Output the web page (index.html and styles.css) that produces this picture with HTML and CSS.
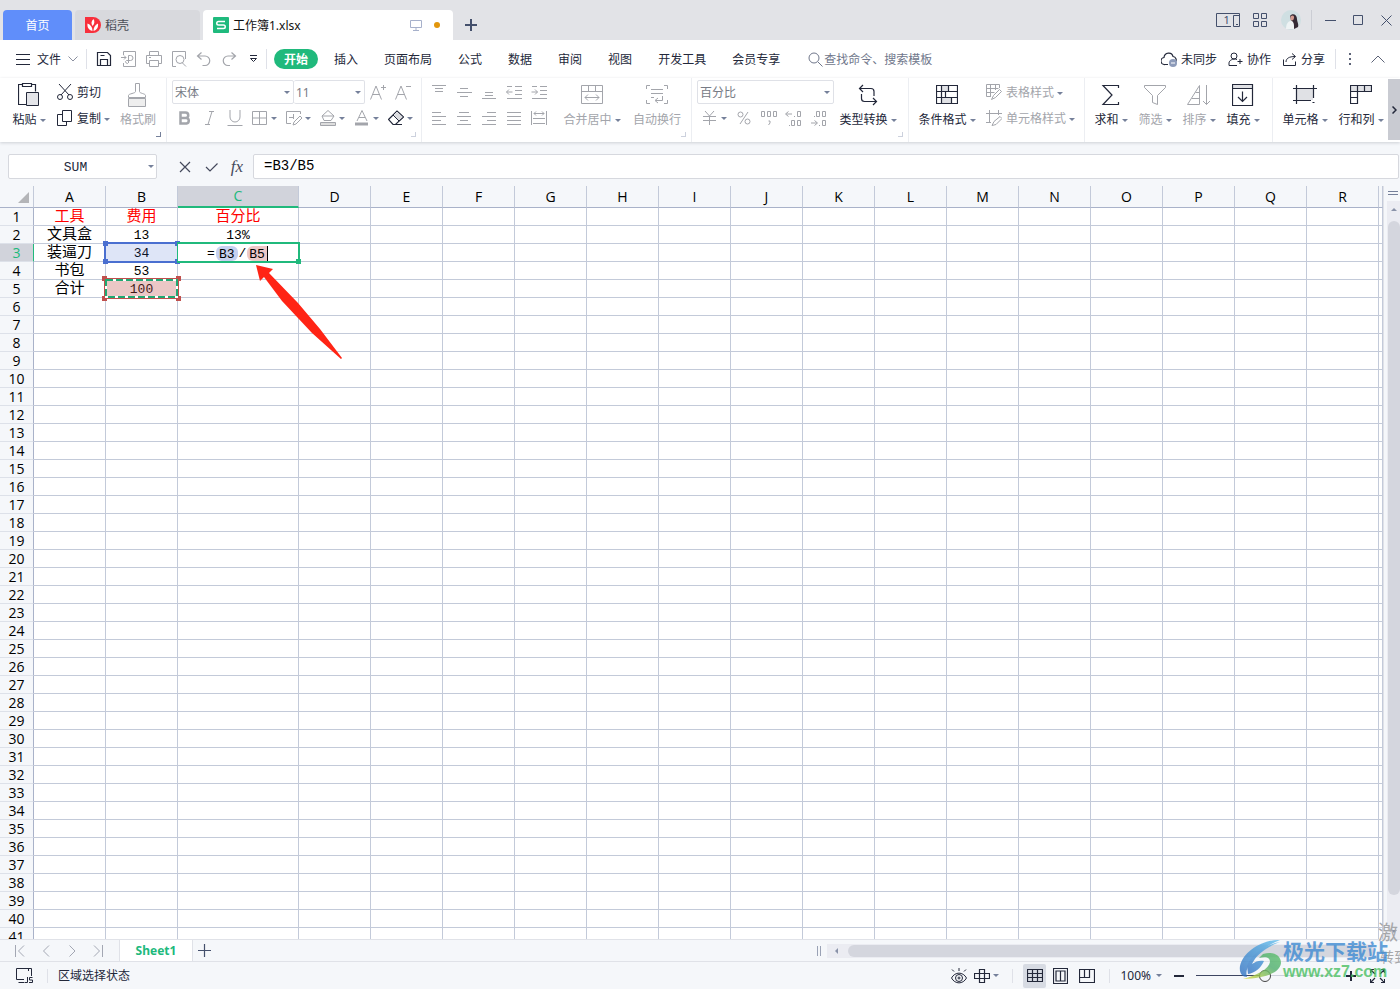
FILE: index.html
```html
<!DOCTYPE html>
<html lang="zh-CN">
<head>
<meta charset="utf-8">
<title>工作簿1.xlsx</title>
<link rel="stylesheet" href="styles.css">
</head>
<body>
<div class="app">
  <header class="titlebar">
    <button class="tab tab-home"><span>首页</span></button>
    <button class="tab tab-docer">
      <svg class="fillico" width="16" height="16" viewBox="0 0 16 16"><path d="M0 0H8a8 8 0 0 1 0 16H0z" fill="#f8303c"/><path d="M7.500 14C3.500 13 2 10 2.500 6.500 5.500 7.500 7.500 10 7.500 14zM7.500 9C6 7 6 4 8.500 2 10 4.500 9.500 7 7.500 9zM8.500 14C8.500 10.500 10 8 13 6.500 13.500 10 12 13 8.500 14z" fill="#fff"/></svg>
      <span>稻壳</span>
    </button>
    <div class="tab tab-file">
      <svg class="fillico" width="16" height="16" viewBox="0 0 16 16"><rect width="16" height="16" rx="1" fill="#1fba7d"/><path d="M12 4.500H5.500a1.500 1.500 0 0 0 0 3.500h5a1.500 1.500 0 0 1 0 3.500H4" fill="none" stroke="#fff" stroke-width="1.500"/></svg>
      <span class="grow">工作簿1.xlsx</span>
      <svg class="ico screen" width="12" height="12" viewBox="0 0 12 12"><path d="M.5 1.500h11v7H.5zM6 8.500v3M3 11.500h6"/></svg>
      <i class="dot"></i>
    </div>
    <button class="tab-add" aria-label="新建"><svg class="ico" width="12" height="12" viewBox="0 0 12 12"><path d="M6 0v12M0 6h12" stroke-width="2"/></svg></button>
    <div class="window-tools">
      <svg class="ico" width="24" height="14" viewBox="0 0 24 14"><path d="M15 13.500H.5V.5h23v13h-6V2.500h6M20 11.500h2"/><text x="7.500" y="11" class="tiny">1</text></svg>
      <svg class="ico" width="15" height="15" viewBox="0 0 15 15"><path d="M.5.5h5v5h-5zM8.500.5h5v5h-5zM.5 8.500h5v5h-5zM8.500 8.500h5v5h-5z"/></svg>
      <svg class="fillico" width="20" height="20" viewBox="0 0 20 20"><circle cx="10" cy="10" r="10" fill="#cfdfe2"/><path d="M9 6c2-3 7-2 7 3 0 3 2 5 1 8l-4 2c0-4-1-7-3-9z" fill="#342b35"/><path d="M9.500 6.500c2-2 4-1 3.500 1.500s-2 3-3.500 2z" fill="#d49c90"/><path d="M5 19c0-5 2-8 5-8s3 4 3 8z" fill="#eef3f4"/></svg>
    </div>
    <div class="window-buttons">
      <button aria-label="最小化"><svg class="ico" width="11" height="11" viewBox="0 0 11 11"><path d="M0 5.500h11"/></svg></button>
      <button aria-label="最大化"><svg class="ico" width="11" height="11" viewBox="0 0 11 11"><path d="M.5.5h9v9h-9z"/></svg></button>
      <button aria-label="关闭"><svg class="ico" width="11" height="11" viewBox="0 0 11 11"><path d="M.5.500l10 10M10.500.500l-10 10"/></svg></button>
    </div>
  </header>

  <nav class="menubar">
    <button class="file-menu">
      <svg class="ico" width="14" height="11" viewBox="0 0 14 11"><path d="M0 .5h14M0 5.500h14M0 10.500h14"/></svg>
      <span>文件</span>
      <svg class="ico pale" width="10" height="6" viewBox="0 0 10 6"><path d="M.5.5 5 5l4.500-4.500"/></svg>
    </button>
    <i class="vline"></i>
    <div class="quick">
      <button aria-label="保存"><svg class="ico" width="16" height="16" viewBox="0 0 16 16"><path d="M1.500 1.500h10l3 3v10h-13zM4.500 14.500v-6h7v6M4.500 4.500h4" stroke-width="1.200"/></svg></button>
      <button class="off" aria-label="输出为PDF"><svg class="ico" width="16" height="16" viewBox="0 0 16 16"><path d="M2.500 4V.5h12v15h-12V12M0 6.500h5M3 4.500l2 2-2 2M7.500 12V4.500h2a2.500 2.500 0 0 1 0 5H5.500a1.500 1.500 0 1 0 2 2"/></svg></button>
      <button class="off" aria-label="打印"><svg class="ico" width="16" height="16" viewBox="0 0 16 16"><path d="M3.500 4.500v-4h9v4M3.500 12.500h-3v-8h15v8h-3M3.500 9.500h9v6h-9zM3 6.500h2"/></svg></button>
      <button class="off" aria-label="打印预览"><svg class="ico" width="16" height="16" viewBox="0 0 16 16"><path d="M5 15.500H1.500V.5h13V8M11 11.500l4 4"/><circle cx="9" cy="8.500" r="4"/></svg></button>
      <button class="off" aria-label="撤销"><svg class="ico" width="16" height="16" viewBox="0 0 16 16"><path d="M5.500 1.500l-4 3.500 4 3.500M1.500 5H9a4.500 4.500 0 0 1 0 9.500H6.500" stroke-width="1.200"/></svg></button>
      <button class="off" aria-label="恢复"><svg class="ico" width="16" height="16" viewBox="0 0 16 16"><path d="M10.500 1.500l4 3.500-4 3.500M14.500 5H7a4.500 4.500 0 0 0 0 9.500h2" stroke-width="1.200"/></svg></button>
      <button aria-label="自定义快速访问工具栏"><svg class="ico" width="9" height="8" viewBox="0 0 9 8"><path d="M1 .5h7M1.500 3.500l3 3 3-3z"/></svg></button>
    </div>
    <i class="vline"></i>
    <button class="pill"><span>开始</span></button>
    <div class="menus">
      <button><span>插入</span></button><button><span>页面布局</span></button><button><span>公式</span></button><button><span>数据</span></button><button><span>审阅</span></button><button><span>视图</span></button><button><span>开发工具</span></button><button><span>会员专享</span></button>
    </div>
    <button class="search">
      <svg class="ico" width="15" height="15" viewBox="0 0 15 15"><circle cx="6" cy="6" r="5"/><path d="M10 10l4.500 4.500"/></svg>
      <span>查找命令、搜索模板</span>
    </button>
    <div class="share">
      <button><svg class="ico" width="16" height="16" viewBox="0 0 16 16"><path d="M7 13.500H4A3.500 3.500 0 0 1 3 6.500C3.500 1 11 .5 12 5.500c3 .5 4 3.500 2.500 5.500" stroke-width="1.200"/><circle cx="12" cy="12" r="4" fill="#8d9bb9" stroke="none"/><path d="M10 12h4" stroke="#fff"/></svg><span>未同步</span></button>
      <button><svg class="ico" width="15" height="15" viewBox="0 0 15 15"><circle cx="6" cy="4" r="3"/><path d="M9 7.500c-4-1.500-8 1-8 3.500v2.500h8M9.500 9.500h5M12 7v5"/></svg><span>协作</span></button>
      <button><svg class="ico" width="15" height="15" viewBox="0 0 15 15"><path d="M1.500 7.500v6h12v-4M4 10c0-3.500 3-5.500 9-5.500M10 1.500l3.500 3-3.500 3"/></svg><span>分享</span></button>
    </div>
    <i class="vline"></i>
    <div class="more">
      <button aria-label="更多"><svg class="ico" width="2" height="12" viewBox="0 0 2 12"><path d="M1 0v2M1 5v2M1 10v2" stroke-width="2"/></svg></button>
      <button aria-label="收起功能区"><svg class="ico" width="14" height="8" viewBox="0 0 14 8"><path d="M.5 7.500 7 1l6.500 6.500"/></svg></button>
    </div>
  </nav>

  <section class="ribbon">
    <div class="group g-clip">
      <button class="big w46"><svg class="ico" width="22" height="24" viewBox="0 0 22 24"><path d="M8 21.500H.5v-20h4M14 1.500h3.500v7M4.500.5h9v3h-9z" stroke-width="1.200"/><path d="M8.500 9.500h12v13h-12z" fill="#e4e5e9"/></svg><span class="lab dd">粘贴</span></button>
      <div class="stack">
        <button class="line"><svg class="ico" width="16" height="16" viewBox="0 0 16 16"><path d="M2 0l10 11M14 0L4 11"/><circle cx="3" cy="13" r="2.500"/><circle cx="13" cy="13" r="2.500"/></svg><span>剪切</span></button>
        <button class="line"><svg class="ico" width="16" height="16" viewBox="0 0 16 16"><path d="M5.500.5h9v11h-9zM5.500 4.500h-5v11h9v-4"/></svg><span class="dd">复制</span></button>
      </div>
      <button class="big w46 off"><svg class="ico" width="20" height="24" viewBox="0 0 20 24"><path d="M7.500.5h4v8c0 2 6 2 6 4v2h-17v-2c0-2 7-2 7-4z"/><path d="M.5 15.500h17v8H.5z" fill="#eee"/></svg><span class="lab">格式刷</span></button>
      <i class="launch dark"></i>
    </div>

    <div class="group g-font">
      <div class="stack">
        <div class="row">
          <label class="combo c-font"><select aria-label="字体"><option>宋体</option></select></label><label class="combo c-size"><select aria-label="字号"><option>11</option></select></label>
          <button class="sq off" aria-label="增大字号"><svg class="ico" width="16" height="16" viewBox="0 0 16 16"><path d="M.5 15.500 6 2l5.500 13.500M2.500 10.500h7M11 3.500h5M13.500 1v5"/></svg></button>
          <button class="sq off" aria-label="减小字号"><svg class="ico" width="16" height="16" viewBox="0 0 16 16"><path d="M.5 15.500 6 2l5.500 13.500M2.500 10.500h7M11 2.500h5"/></svg></button>
        </div>
        <div class="row off">
          <button class="sq" aria-label="加粗"><svg class="ico" width="14" height="16" viewBox="0 0 14 16"><path d="M2.500 2.500h5a2.700 2.700 0 0 1 0 5.500h-5zM2.500 8h6a2.800 2.800 0 0 1 0 5.500h-6z" stroke-width="2.500"/></svg></button>
          <button class="sq" aria-label="倾斜"><svg class="ico" width="14" height="16" viewBox="0 0 14 16"><path d="M6 1.500h5M2 14.500h5M9 1.500l-4 13"/></svg></button>
          <button class="sq" aria-label="下划线"><svg class="ico" width="16" height="16" viewBox="0 0 16 16"><path d="M3 0v7a5 5 0 0 0 10 0V0M.5 15.500h15"/></svg></button>
          <button class="sqd dd" aria-label="边框"><svg class="ico" width="16" height="16" viewBox="0 0 16 16"><path d="M.5 1.500h14v13H.5zM7.500 1.500v13M.5 8h14"/></svg></button>
          <button class="sqd dd" aria-label="绘图边框"><svg class="ico" width="16" height="16" viewBox="0 0 16 16"><path d="M5 13.500H.5v-12h14V4M3 7.500h5M7.500 4v5"/><path d="M7 15l1-3 6-6 2 2-6 6z" fill="#fff"/></svg></button>
          <button class="sqd dd" aria-label="填充颜色"><svg class="ico" width="16" height="16" viewBox="0 0 16 16"><path d="M2 6l6-5.500L14 6l-3 4.500H4zM2 6h12"/><path d="M.5 12.500h15v3H.5z" fill="#ddd"/></svg></button>
          <button class="sqd dd" aria-label="字体颜色"><svg class="ico" width="16" height="16" viewBox="0 0 16 16"><path d="M3 11 8 .5 13 11M5 7.500h6"/><path d="M1 14h13" stroke-width="3"/></svg></button>
          <button class="sqd dd on" aria-label="清除"><svg class="ico" width="16" height="16" viewBox="0 0 16 16"><path d="M.5 9.500 9 1l6.500 6-8 7.500H5z" stroke-width="1.200"/><path d="M5 5l6 6 4.500-4L9 1z" fill="#dcdde1"/><path d="M5 14.500h9"/></svg></button>
        </div>
      </div>
      <i class="launch"></i>
    </div>

    <div class="group g-align off">
      <div class="stack">
        <div class="row">
          <button class="sq" aria-label="顶端对齐"><svg class="ico" width="16" height="16" viewBox="0 0 16 16"><path d="M1 1.500h14M4 4.500h8M4 7.500h8"/></svg></button>
          <button class="sq" aria-label="垂直居中"><svg class="ico" width="16" height="16" viewBox="0 0 16 16"><path d="M4 4.500h8M1 8.500h15M4 12.500h8"/></svg></button>
          <button class="sq" aria-label="底端对齐"><svg class="ico" width="16" height="16" viewBox="0 0 16 16"><path d="M4 8.500h8M4 11.500h8M1 14.500h14"/></svg></button>
          <button class="sq" aria-label="减少缩进"><svg class="ico" width="16" height="16" viewBox="0 0 16 16"><path d="M9 2.500h7M9 6.500h7M9 10.500h7M1 14.500h15M.5 8h6M3 5.500.500 8 3 10.500M1 2.500h5"/></svg></button>
          <button class="sq" aria-label="增加缩进"><svg class="ico" width="16" height="16" viewBox="0 0 16 16"><path d="M9 2.500h7M9 6.500h7M9 10.500h7M1 14.500h15M.5 8h6M4 5.500 6.500 8 4 10.500M1 2.500h5"/></svg></button>
        </div>
        <div class="row">
          <button class="sq" aria-label="左对齐"><svg class="ico" width="16" height="16" viewBox="0 0 16 16"><path d="M1 2.500h9M1 6.500h14M1 10.500h9M1 14.500h14"/></svg></button>
          <button class="sq" aria-label="水平居中"><svg class="ico" width="16" height="16" viewBox="0 0 16 16"><path d="M3 2.500h10M1 6.500h14M4 10.500h8M1 14.500h14"/></svg></button>
          <button class="sq" aria-label="右对齐"><svg class="ico" width="16" height="16" viewBox="0 0 16 16"><path d="M6 2.500h9M1 6.500h14M6 10.500h9M1 14.500h14"/></svg></button>
          <button class="sq" aria-label="两端对齐"><svg class="ico" width="16" height="16" viewBox="0 0 16 16"><path d="M1 2.500h14M1 6.500h14M1 10.500h14M1 14.500h14"/></svg></button>
          <button class="sq" aria-label="分散对齐"><svg class="ico" width="16" height="16" viewBox="0 0 16 16"><path d="M.5 1v14M15.500 1v14M3 3.500h10M5 1.500l-2 2 2 2M11 1.500l2 2-2 2M2 8.500h12M2 13.500h12"/></svg></button>
        </div>
      </div>
      <button class="big w68"><svg class="ico" width="22" height="20" viewBox="0 0 22 20"><path d="M.5.5h21v18H.5zM.5 6.500h21M7.500.5v6M14.500.5v6M4 12.500h14M7 9.500l-3 3 3 3M15 9.500l3 3-3 3"/></svg><span class="lab dd">合并居中</span></button>
      <button class="big w58"><svg class="ico" width="22" height="20" viewBox="0 0 22 20"><path d="M4 .5H.5V4M18 .5h3.500V4M.5 15v3.500H4M21.500 15v3.500H18M5 4.500h12M5 8.500h12M5 12.500h3M16.500 11v4.500h-7M12 13l-3 2.500 3 2.500"/></svg><span class="lab">自动换行</span></button>
      <i class="launch"></i>
    </div>

    <div class="group g-num">
      <div class="stack">
        <div class="row"><label class="combo c-num"><select aria-label="数字格式"><option>百分比</option></select></label></div>
        <div class="row off">
          <button class="sqd dd" aria-label="货币格式"><svg class="ico" width="16" height="16" viewBox="0 0 16 16"><path d="M3 1l4.500 5L12 1M1 6.500h13M1 10.500h13M7.500 6.500V15"/></svg></button>
          <button class="sq" aria-label="百分比样式"><svg class="ico" width="14" height="16" viewBox="0 0 14 16"><circle cx="3.500" cy="4.500" r="2.500"/><circle cx="10.500" cy="11.500" r="2.500"/><path d="M11 2 3 14"/></svg></button>
          <button class="sq" aria-label="千位分隔样式"><svg class="ico" width="18" height="16" viewBox="0 0 18 16"><path d="M1.500 1.500h3v5h-3zM7.500 1.500h3v5h-3zM13.500 1.500h3v5h-3zM8.500 11h1.500v2l-1.500 2"/></svg></button>
          <button class="sq" aria-label="增加小数位数"><svg class="ico" width="18" height="16" viewBox="0 0 18 16"><path d="M1 4h6M3.500 1.500.500 4l3 2.500M9 6.500h1M12.500 1.500h3v5h-3zM4 15.500h1M6.500 10.500h3v5h-3zM12.500 10.500h3v5h-3z"/></svg></button>
          <button class="sq" aria-label="减少小数位数"><svg class="ico" width="18" height="16" viewBox="0 0 18 16"><path d="M1 13h6M4.500 10.500l3 2.500-3 2.500M9 15.500h1M12.500 10.500h3v5h-3zM4 6.500h1M6.500 1.500h3v5h-3zM12.500 1.500h3v5h-3z"/></svg></button>
        </div>
      </div>
      <button class="big w68"><svg class="ico" width="20" height="22" viewBox="0 0 20 22"><path d="M5 1 1.500 4.500 5 8M1.500 4.500H13a3 3 0 0 1 3 3V12M15 14l3.500 3.500L15 21M18.500 17.500H6.500a3 3 0 0 1-3-3V10" stroke-width="1.200"/></svg><span class="lab dd">类型转换</span></button>
      <i class="launch"></i>
    </div>

    <div class="group g-style">
      <button class="big w68"><svg class="ico" width="22" height="20" viewBox="0 0 22 20"><path d="M5 .500h7v6H5zM5 13h11v6H5z" fill="#e0e1e5" stroke="none"/><path d="M.5.5h21v18H.5zM.5 6.500h21M.5 12.500h21M5.500.5v18M12.500.5v6M9.500 6.500v6M15.500 12.500v6" stroke-width="1.200"/></svg><span class="lab dd">条件格式</span></button>
      <div class="stack off">
        <button class="line"><svg class="ico" width="16" height="16" viewBox="0 0 16 16"><path d="M5 12.500H.5V.5h13V4M.5 4.500h12M.5 8.500h8M4.500.5v12M9.500.5V6"/><path d="M5.500 15.500l2-4 6-6 2 2-6 6z" fill="#fff"/></svg><span class="dd">表格样式</span></button>
        <button class="line"><svg class="ico" width="16" height="16" viewBox="0 0 16 16"><path d="M0 3.500h16M3.500 0v13M12.500 0v5M0 12.500h5"/><path d="M6 15.500l2-4 6-5 2 2-6 6z" fill="#fff"/></svg><span class="dd">单元格样式</span></button>
      </div>
    </div>

    <div class="group g-edit">
      <button class="big w44"><svg class="ico" width="20" height="22" viewBox="0 0 20 22"><path d="M17.500 4V1.500H2L11 11 2 20.500h15.500V18" stroke-width="1.200"/></svg><span class="lab dd">求和</span></button>
      <button class="big w44 off"><svg class="ico" width="22" height="22" viewBox="0 0 22 22"><path d="M.5 1.500h21v2l-8 8v9l-5-2v-7l-8-8z"/></svg><span class="lab dd">筛选</span></button>
      <button class="big w44 off"><svg class="ico" width="24" height="22" viewBox="0 0 24 22"><path d="M12.500 1.500v19H.500zM8.500 8.500h4M5 14.500h7.500M19.500 1v19.500M16 17l3.500 3.500L23 17"/></svg><span class="lab dd">排序</span></button>
      <button class="big w44"><svg class="ico" width="22" height="22" viewBox="0 0 22 22"><path d="M.5.5h20v4H.5z" fill="#e0e1e5"/><path d="M.5.5h20v21H.5zM10.500 7.500v10M6 13l4.500 4.500L15 13" stroke-width="1.200"/></svg><span class="lab dd">填充</span></button>
    </div>

    <div class="group g-cells">
      <button class="big w56"><svg class="ico" width="24" height="20" viewBox="0 0 24 20"><path d="M3 3h17v12H3z" fill="#e0e1e5" stroke="none"/><path d="M0 3.500h24M0 15.500h18M3.500 0v19M20.500 0v13M19.500 17.500h2" stroke-width="1.200"/></svg><span class="lab dd">单元格</span></button>
      <button class="big w56"><svg class="ico" width="22" height="20" viewBox="0 0 22 20"><path d="M.5.5h21v6H.5z" fill="#e0e1e5"/><path d="M.5.5h21v6H7.500v12h-7zM7.500.5v6M14.500.5v6M.5 6.500h7M.5 12.500h7" stroke-width="1.200"/></svg><span class="lab dd">行和列</span></button>
    </div>
    <button class="ribbon-next" aria-label="更多功能"><svg class="ico" width="5" height="8" viewBox="0 0 5 8"><path d="M.5.5 4 4 .5 7.500" stroke-width="1.500"/></svg></button>
  </section>

  <section class="formulabar">
    <label class="namebox"><input value="SUM" aria-label="名称框"></label>
    <div class="fx">
      <button aria-label="取消"><svg class="ico" width="12" height="12" viewBox="0 0 12 12"><path d="M1 1l10 10M11 1 1 11" stroke-width="1.200"/></svg></button>
      <button aria-label="输入"><svg class="ico" width="13" height="10" viewBox="0 0 13 10"><path d="M1 5l4 4 7.500-7.500" stroke-width="1.200"/></svg></button>
      <button class="fxname" aria-label="插入函数">fx</button>
    </div>
    <input class="formula" value="=B3/B5" aria-label="编辑栏">
  </section>

  <main class="sheet">
    <div class="grid-wrap">
      <table class="grid" id="grid"></table>
      <svg class="pointer" width="88" height="96" viewBox="0 0 88 96"><path d="M1 1 18 5 14 9 43 39 65 65 87 94 86 95 57 69 27 37 9 13 5 17z" fill="#ff2415"/></svg>
    </div>
    <div class="vscroll">
      <svg class="ico split" width="10" height="4" viewBox="0 0 10 4"><path d="M0 .5h10M0 3.500h10"/></svg>
      <div class="vtrack"><i class="tri up"></i><i class="vthumb"></i><i class="tri down"></i></div>
    </div>
  </main>

  <footer class="sheetbar">
    <div class="nav">
      <button aria-label="第一个"><svg class="ico" width="10" height="12" viewBox="0 0 10 12"><path d="M.5 0v12M9 .5 3.500 6 9 11.500"/></svg></button>
      <button aria-label="上一个"><svg class="ico" width="10" height="12" viewBox="0 0 10 12"><path d="M8 .5 2.500 6 8 11.500"/></svg></button>
      <button aria-label="下一个"><svg class="ico" width="10" height="12" viewBox="0 0 10 12"><path d="M2.500.5 8 6l-5.500 5.500"/></svg></button>
      <button aria-label="最后一个"><svg class="ico" width="10" height="12" viewBox="0 0 10 12"><path d="M9.500 0v12M1 .5 6.500 6 1 11.500"/></svg></button>
    </div>
    <button class="sheet-tab">Sheet1</button>
    <button class="sheet-add" aria-label="新建工作表"><svg class="ico" width="13" height="13" viewBox="0 0 13 13"><path d="M6.500 0v13M0 6.500h13" stroke-width="1.200"/></svg></button>
    <div class="hscroll"><i class="grip"></i><div class="htrack"><i class="tri left"></i><i class="hthumb"></i></div></div>
  </footer>

  <footer class="status">
    <svg class="ico" width="18" height="16" viewBox="0 0 18 16"><path d="M8 11.500H.5V.5h15V8M2.500 14.500h6M12.500 3V.5M11.500 9v5.500H9M16.500 9.500h-3v2.500h3v2.500H13"/></svg>
    <i class="vline"></i>
    <span class="mode">区域选择状态</span>
    <div class="views">
      <svg class="ico" width="16" height="16" viewBox="0 0 16 16"><path d="M.5 10C4 3.500 12 3.500 15.500 10 12 16.500 4 16.500.5 10zM8 0v3M1 1.500l2 2M15 1.500l-2 2"/><circle cx="8" cy="10" r="3.500"/><circle cx="8" cy="10" r="1"/></svg>
      <button class="dd" aria-label="阅读模式"><svg class="ico" width="16" height="14" viewBox="0 0 16 14"><path d="M5.500.5h5v13h-5zM.5 4.500h15v5H.5z" stroke-width="1.200"/></svg></button>
      <i class="vline"></i>
      <button class="vbtn active" aria-label="普通视图"><svg class="ico" width="16" height="14" viewBox="0 0 16 14"><path d="M.5.5h15v12H.5zM.5 4.500h15M.5 8.500h15M5.500.5v12M10.500.5v12" stroke-width="1.200"/></svg></button>
      <button class="vbtn" aria-label="页面布局"><svg class="ico" width="15" height="16" viewBox="0 0 15 16"><path d="M.5.5h14v15H.5zM3 3h9v10H3zM7.500 3v10" stroke-width="1.200"/></svg></button>
      <button class="vbtn" aria-label="分页预览"><svg class="ico" width="16" height="14" viewBox="0 0 16 14"><path d="M.5.5h15v13H.5zM.5 8.500h10v-8M5.500.5v8" stroke-width="1.200"/></svg></button>
      <i class="vline near"></i>
      <button class="zoomval dd">100%</button>
      <button class="zbtn" aria-label="缩小"><svg class="ico" width="10" height="10" viewBox="0 0 10 10"><path d="M0 5h10" stroke-width="2"/></svg></button>
      <input class="slider" type="range" min="0" max="100" value="50" aria-label="显示比例">
      <button class="zbtn" aria-label="放大"><svg class="ico" width="10" height="10" viewBox="0 0 10 10"><path d="M0 5h10M5 0v10" stroke-width="2"/></svg></button>
      <button class="zbtn" aria-label="全屏"><svg class="ico" width="15" height="14" viewBox="0 0 15 14"><path d="M.5 4V.5H4M11 .5h3.500V4M.5 10v3.500H4M14.500 10v3.500H11M1 1l4 4M14 1l-4 4M1 13l4-4M14 13l-4-4" stroke-width="1.200"/></svg></button>
    </div>
  </footer>

  <div class="activate"><span class="act-big">激</span><span class="act-small">转到</span></div>
  <div class="brand">
    <svg class="fillico" width="44" height="42" viewBox="0 0 44 42">
      <defs><linearGradient id="ga" x1="0" y1="1" x2="1" y2="0"><stop offset="0" stop-color="#2f6fc0"/><stop offset="1" stop-color="#62c0ee"/></linearGradient><linearGradient id="gb" x1="0" y1="1" x2="1" y2="0"><stop offset="0" stop-color="#e3dc3c"/><stop offset=".6" stop-color="#4dae6c"/><stop offset="1" stop-color="#5cc06a"/></linearGradient></defs>
      <path d="M41 1C25 0 4 12 1 27 0 34 3 38 8 38 5 30 14 12 41 1z" fill="url(#ga)"/>
      <path d="M24 15C34 12 42 16 42 24 41 34 26 39 4 40 18 36 30 30 31 23 31 19 28 17 20 19z" fill="url(#gb)"/>
      <path d="M9 35C16 34 22 29 25 22 21 21 17 22 13 25 17 16 27 8 41 3 29 5 12 14 8 27z" fill="url(#ga)"/>
    </svg>
    <div class="brand-text"><span class="brand-name">极光下载站</span><span class="brand-url">www.xz7.com</span></div>
  </div>
</div>
<script src="script.js"></script>
</body>
</html>
```

FILE: styles.css
```css
* { box-sizing: border-box; }
body {
  margin: 0;
  font: 12px/18px "Noto Sans", "Noto Sans CJK SC", sans-serif;
  color: #23283a;
  background: #f5f7fa;
}
button, input, select { font: inherit; color: inherit; border: 0; padding: 0; margin: 0; background: none; outline: none; }
button { display: flex; align-items: center; justify-content: center; white-space: nowrap; cursor: pointer; flex: none; }
svg { flex: none; display: block; }
.ico { fill: none; stroke: currentColor; stroke-width: 1; }
.off { color: #a3a5ab; }
.on { color: #23283a; }
.pale { color: #8b90a0; }
.grow { flex: 1; }
.vline { width: 1px; height: 20px; background: #dfe1e8; flex: none; }
.tab span, .menubar span, .line span { padding-top: 2px; }
.dd::after {
  content: "";
  display: inline-block;
  flex: none;
  margin-left: 3px;
  vertical-align: middle;
  border: 3px solid transparent;
  border-top-color: #75809a;
  border-bottom: 0;
}
.app { position: relative; height: 100vh; display: flex; flex-direction: column; overflow: hidden; }

/* title bar */
.titlebar { height: 40px; padding-left: 3px; display: flex; align-items: flex-end; gap: 3px; background: #e2e3e7; color: #44506c; flex: none; }
.tab { height: 30px; border-radius: 4px 4px 0 0; display: flex; align-items: center; }
.tab-home { width: 69px; background: #608efa; color: #fff; }
.tab-docer { width: 125px; background: #d8d9dd; color: #4b4e57; justify-content: flex-start; padding-left: 10px; gap: 4px; }
.tab-file { width: 250px; background: #fff; color: #111; padding: 0 13px 0 10px; gap: 4px; }
.screen { color: #a7b1cb; margin-right: 8px; }
.dot { width: 6px; height: 6px; border-radius: 50%; background: #e2960c; }
.tab-add { width: 30px; height: 30px; }
.window-tools { margin-left: auto; height: 40px; display: flex; align-items: center; gap: 13px; padding-right: 7px; }
.window-buttons { height: 40px; display: flex; align-items: center; }
.window-buttons::before { content: ""; width: 1px; height: 20px; margin-right: 4px; background: #cbcdd4; }
.window-buttons button { width: 28px; height: 30px; }
.tiny { font: 11px "Noto Sans", sans-serif; fill: currentColor; stroke: none; }

/* menu bar */
.menubar { height: 38px; display: flex; align-items: center; background: #fff; flex: none; }
.file-menu { padding-left: 16px; gap: 7px; margin-right: 8px; }
.quick { display: flex; padding-left: 4px; }
.quick button { width: 25px; height: 24px; }
.pill { height: 20px; padding: 0 10px; margin: 0 13px 0 7px; border-radius: 10px; background: #20b97c; color: #fff; font-weight: 700; }
.menus { display: flex; }
.menus button { padding: 0 13px; }
.menus button:first-child { padding-left: 3px; }
.search { margin-left: 15px; gap: 1px; color: #70778b; }
.share { margin-left: auto; display: flex; gap: 11px; margin-right: 10px; }
.share button { gap: 4px; color: #23283a; }
.more { display: flex; padding-right: 8px; }
.more button { width: 28px; height: 24px; color: #5c6377; }

/* ribbon */
.ribbon { position: relative; height: 64px; display: flex; background: #fff; flex: none; box-shadow: 0 1px 3px #cdd0d6; z-index: 1; }
.group { position: relative; display: flex; align-items: flex-start; padding-top: 2px; border-right: 1px solid #eceef2; flex: none; }
.g-clip { width: 167px; padding-left: 6px; }
.g-font { width: 255px; padding-left: 5px; }
.g-align { width: 270px; padding-left: 4px; }
.g-align .stack { padding-right: 7px; }
.g-num { width: 217px; padding-left: 5px; }
.g-style { width: 176px; padding-left: 4px; gap: 5px; }
.g-edit { width: 188px; padding-left: 4px; }
.g-cells { width: 115px; padding-left: 4px; border-right: 0; }
.stack { display: flex; flex-direction: column; gap: 2px; }
.row { display: flex; height: 24px; align-items: center; }
.sq { width: 25px; height: 24px; }
.sqd { width: 34px; height: 24px; }
.line { height: 24px; gap: 4px; justify-content: flex-start; }
.big { flex-direction: column; height: 50px; }
.big svg { margin: auto; }
.lab { height: 20px; line-height: 20px; }
.w44 { width: 44px; }
.w46 { width: 46px; }
.w56 { width: 56px; }
.w58 { width: 62px; }
.w68 { width: 68px; }
.g-clip .stack { padding: 0 5px; }
.launch { position: absolute; right: 5px; bottom: 5px; width: 5px; height: 5px; border: solid #ccd1dd; border-width: 0 1px 1px 0; }
.launch.dark { border-color: #75809a; }
.combo { position: relative; display: block; height: 24px; border: 1px solid #dfe1e7; border-radius: 2px; }
.combo::after { content: ""; position: absolute; right: 3px; top: 10px; border: 3px solid transparent; border-top-color: #75809a; border-bottom: 0; pointer-events: none; }
.combo select { appearance: none; width: 100%; height: 22px; padding: 2px 0 0 2px; color: #777b85; }
.c-font { width: 122px; }
.c-size { width: 71px; border-left: 0; }
.c-num { width: 137px; }
.ribbon-next { width: 13px; height: 61px; margin: 1px 0 0 auto; background: #c9cbd2; }

/* formula bar */
.formulabar { height: 44px; padding: 12px 1px 7px 8px; display: flex; background: #f5f7fa; flex: none; }
.namebox { position: relative; width: 149px; height: 25px; border: 1px solid #d6d8de; border-radius: 2px; background: #fff; }
.namebox input { width: 100%; height: 23px; padding-right: 14px; padding-top: 1px; text-align: center; font: 13px "Liberation Mono", monospace; }
.namebox::after { content: ""; position: absolute; right: 2px; top: 10px; border: 3px solid transparent; border-top-color: #75809a; border-bottom: 0; }
.fx { display: flex; width: 96px; padding-left: 15px; color: #44495c; }
.fx button { width: 26px; height: 25px; }
.fxname { font: italic 17px "Liberation Serif", serif; }
.formula { flex: 1; height: 25px; border: 1px solid #d6d8de; border-radius: 2px; background: #fff; padding: 0 10px 2px; font: 14px "Liberation Mono", monospace; color: #000; }

/* grid */
.sheet { flex: 1; min-height: 0; display: flex; }
.grid-wrap { position: relative; flex: 1; min-width: 0; overflow: hidden; background: #fff; }
.grid { width: 100%; table-layout: fixed; border-collapse: separate; border-spacing: 0; color: #000; }
.c-head { width: 34px; }
.c-std { width: 72px; }
.c-wide { width: 121px; }
.grid th, .grid td { height: 18px; padding: 0; font-weight: 400; text-align: center; border: solid #c3cad9; border-width: 0 1px 1px 0; }
.grid th { font: 14px/17px "Open Sans", "Noto Sans", sans-serif; background: #f5f7fa; }
.grid thead th { height: 22px; line-height: 21px; border-right-color: #c3cad9; border-bottom-color: #a9b2c9; }
.grid thead th.cur { background: #d1d3db; color: #20b97c; border-bottom: 2px solid #20b97c; line-height: 20px; }
.grid tbody th { border-right-color: #a9b2c9; border-bottom-color: #dde1e9; }
.grid tbody th.cur { background: #d1d3db; color: #20b97c; border-right-color: #20b97c; }
.grid td { position: relative; padding-top: 2px; font: 15px/15px "Liberation Mono", "Noto Sans CJK SC", monospace; white-space: nowrap; }
.grid td.num { padding-top: 3px; font-size: 13px; line-height: 14px; }
.grid td.red { color: #f00; }
.corner { position: relative; }
.corner::after { content: ""; position: absolute; right: 4px; bottom: 4px; border: solid transparent; border-width: 0 0 11px 11px; border-bottom-color: #b4b5b8; }
.mark { position: absolute; z-index: 1; top: -2px; right: -2px; bottom: -2px; left: -2px; border: 2px solid #4a6fd0; background: #4a6fd02e; }
.mark b { position: absolute; width: 5px; height: 5px; background: #4a6fd0; }
.mark b:nth-child(1) { left: -3px; top: -3px; }
.mark b:nth-child(2) { right: -3px; top: -3px; }
.mark b:nth-child(3) { left: -3px; bottom: -3px; }
.mark b:nth-child(4) { right: -3px; bottom: -3px; }
.mark.ref2 { border: 1px solid #c0504d; background: #c0504d52; }
.mark.ref2 b { background: #c0504d; }
.ants { position: absolute; left: 0; top: 0; width: 100%; height: 100%; }
.ants rect { x: 1px; y: 1px; width: calc(100% - 2px); height: calc(100% - 2px); fill: none; stroke-width: 2; stroke: #fff; }
.ants rect + rect { stroke: #20a872; stroke-dasharray: 7 3; }
.edit { position: absolute; top: -2px; right: -2px; bottom: -2px; left: -1px; border: 2px solid #20b97c; border-left-width: 1px; background: #fff; display: flex; justify-content: center; align-items: center; padding-top: 2px; z-index: 2; }
.edit::after { content: ""; position: absolute; right: -3px; bottom: -3px; width: 5px; height: 5px; background: #20b97c; }
.edit mark { border-radius: 6px; height: 15px; line-height: 17px; padding: 0 3px; margin: 0 1px; background: #c6d1f0; color: #000; }
.edit mark.m2 { background: #ecc8c7; padding: 0 2px; border-right: 1px solid #000; border-radius: 6px 0 0 6px; }
.pointer { position: absolute; left: 255px; top: 78px; z-index: 3; }
.vscroll { width: 17px; padding-left: 3px; background: #f5f7fa; border-left: 1px solid #dfe1e8; display: flex; flex-direction: column; align-items: stretch; flex: none; color: #75809a; }
.split { margin: 5px 1px 6px; }
.vtrack { flex: 1; background: #ebecf2; display: flex; flex-direction: column; align-items: center; padding: 6px 0; gap: 10px; }
.vthumb { flex: 1; width: 12px; border-radius: 6px; background: #d4d6de; margin-bottom: 25px; }
.tri { width: 0; border: 3px solid transparent; flex: none; }
.tri.up { border-bottom-color: #8a93a9; border-top: 0; margin-top: 1px; }
.tri.down { border-top-color: #8a93a9; border-bottom: 0; }
.tri.left { border-right-color: #8a93a9; border-left: 0; }

/* sheet tabs */
.sheetbar { height: 23px; display: flex; align-items: stretch; border: solid #e0e2e8; border-width: 1px 0; flex: none; }
.nav { display: flex; width: 119px; padding-left: 7px; color: #a3a7b3; }
.nav button { width: 26px; }
.sheet-tab { width: 74px; background: #fff; border: solid #e0e2e8; border-width: 0 1px; color: #20b97c; font-weight: 700; }
.sheet-add { width: 23px; color: #44506c; }
.hscroll { margin-left: auto; width: 44%; max-width: 583px; display: flex; align-items: center; gap: 6px; padding: 3px 27px 3px 0; }
.grip { width: 4px; height: 10px; border: solid #9aa2b5; border-width: 0 1px; flex: none; }
.htrack { flex: 1; height: 14px; background: #ebecf2; display: flex; align-items: center; gap: 10px; padding-left: 8px; }
.hthumb { flex: 1; height: 12px; border-radius: 6px; background: #d4d6de; }

/* status bar */
.status { height: 27px; padding: 0 14px 0 16px; display: flex; align-items: center; flex: none; }
.status .vline { height: 14px; margin: 0 10px 0 13px; }
.status .vline.near { margin-left: 8px; }
.views { margin-left: auto; display: flex; align-items: center; }
.views > .dd { margin-left: 7px; }
.vbtn { width: 23px; height: 24px; border-radius: 2px; margin-right: 3px; }
.vbtn.active { background: #d7dbe3; }
.views .vline + .zoomval { margin-left: 0; font-size: 12px; }
.zoomval::after { margin-left: 5px; }
.zbtn { width: 18px; height: 18px; margin: 0 0 0 8px; }
.slider { appearance: none; width: 138px; height: 15px; margin: 0 0 0 8px; background: linear-gradient(90deg, #3d4662 50%, #cdd1db 50%) center / 100% 1px no-repeat; }
.slider::-webkit-slider-thumb { appearance: none; width: 12px; height: 12px; border: 1px solid #444; border-radius: 50%; background: #f5f7fa; }

/* corner overlays */
.activate { position: absolute; right: 0; bottom: 20px; width: 22px; height: 48px; overflow: hidden; color: #a6a7aa; white-space: nowrap; display: flex; flex-direction: column; z-index: 4; }
.act-big { font-size: 20px; line-height: 24px; }
.act-small { font-size: 14px; line-height: 24px; padding-left: 2px; }
.brand { position: absolute; right: 12px; bottom: 8px; display: flex; align-items: center; opacity: .8; z-index: 5; }
.brand-text { display: flex; flex-direction: column; font-weight: 700; white-space: nowrap; }
.brand-name { font-size: 21px; line-height: 24px; color: #3f8bd2; }
.brand-url { font: 700 16px/18px "Liberation Sans", sans-serif; color: #4bbf62; }
```

FILE: script.js
```js
const COLS = "ABCDEFGHIJKLMNOPQR".split("");
const ROWS = 41;
const handles = "<b></b><b></b><b></b><b></b>";
const cells = {
  A1: ["工具", "red"], B1: ["费用", "red"], C1: ["百分比", "red"],
  A2: ["文具盒", ""], B2: ["13", "num"], C2: ["13%", "num"],
  A3: ["装逼刀", ""], B3: ['34<span class="mark">' + handles + "</span>", "num"],
  C3: ['<span class="edit">=<mark>B3</mark>/<mark class="m2">B5</mark></span>', "num"],
  A4: ["书包", ""], B4: ["53", "num"],
  A5: ["合计", ""],
  B5: ['100<span class="mark ref2">' + handles + '<svg class="ants"><rect/><rect/></svg></span>', "num"]
};

let html = '<colgroup><col class="c-head">';
COLS.forEach(c => { html += `<col class="${c === "C" ? "c-wide" : "c-std"}">`; });
html += '<col></colgroup><thead><tr><th class="corner"></th>';
COLS.forEach(c => { html += `<th${c === "C" ? ' class="cur"' : ""}>${c}</th>`; });
html += "<th></th></tr></thead><tbody>";
for (let r = 1; r <= ROWS; r++) {
  html += `<tr><th${r === 3 ? ' class="cur"' : ""}>${r}</th>`;
  COLS.forEach(c => {
    const [text, cls] = cells[c + r] || ["", ""];
    html += `<td class="${cls}">${text}</td>`;
  });
  html += "<td></td></tr>";
}
document.getElementById("grid").innerHTML = html + "</tbody>";
```
